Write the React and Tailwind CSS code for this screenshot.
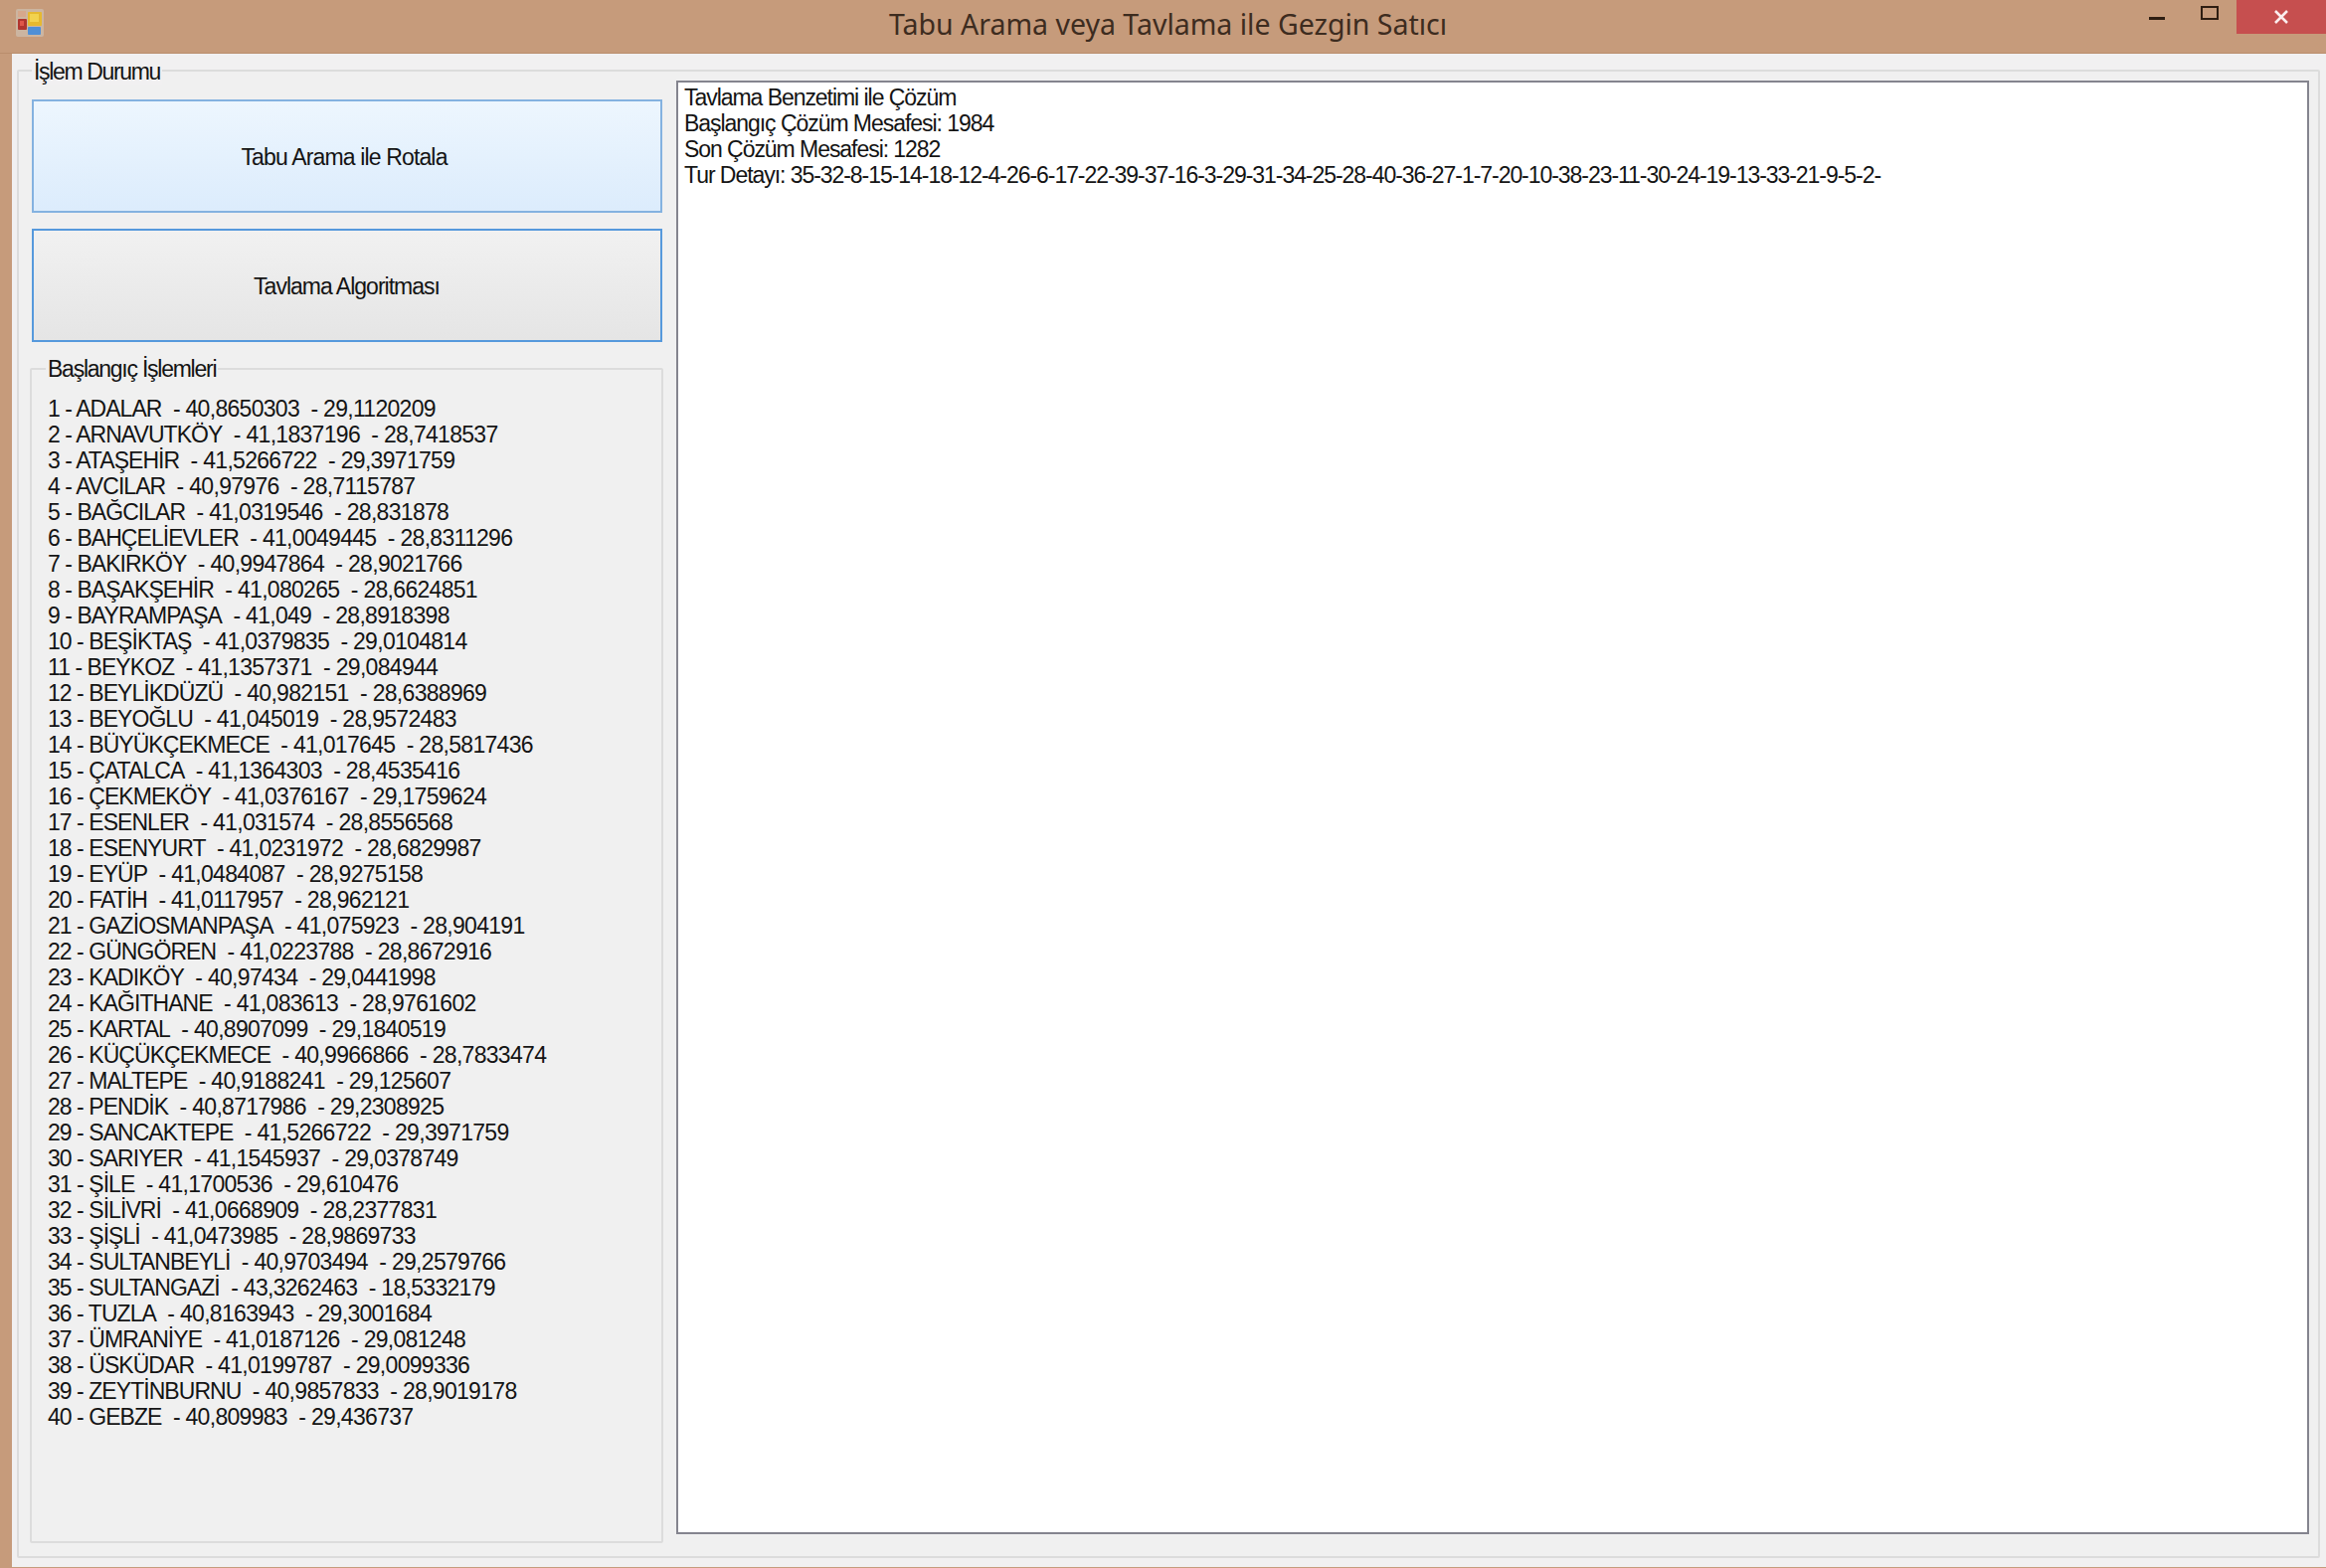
const rows = [
"1 - ADALAR  - 40,8650303  - 29,1120209",
"2 - ARNAVUTKÖY  - 41,1837196  - 28,7418537",
"3 - ATAŞEHİR  - 41,5266722  - 29,3971759",
"4 - AVCILAR  - 40,97976  - 28,7115787",
"5 - BAĞCILAR  - 41,0319546  - 28,831878",
"6 - BAHÇELİEVLER  - 41,0049445  - 28,8311296",
"7 - BAKIRKÖY  - 40,9947864  - 28,9021766",
"8 - BAŞAKŞEHİR  - 41,080265  - 28,6624851",
"9 - BAYRAMPAŞA  - 41,049  - 28,8918398",
"10 - BEŞİKTAŞ  - 41,0379835  - 29,0104814",
"11 - BEYKOZ  - 41,1357371  - 29,084944",
"12 - BEYLİKDÜZÜ  - 40,982151  - 28,6388969",
"13 - BEYOĞLU  - 41,045019  - 28,9572483",
"14 - BÜYÜKÇEKMECE  - 41,017645  - 28,5817436",
"15 - ÇATALCA  - 41,1364303  - 28,4535416",
"16 - ÇEKMEKÖY  - 41,0376167  - 29,1759624",
"17 - ESENLER  - 41,031574  - 28,8556568",
"18 - ESENYURT  - 41,0231972  - 28,6829987",
"19 - EYÜP  - 41,0484087  - 28,9275158",
"20 - FATİH  - 41,0117957  - 28,962121",
"21 - GAZİOSMANPAŞA  - 41,075923  - 28,904191",
"22 - GÜNGÖREN  - 41,0223788  - 28,8672916",
"23 - KADIKÖY  - 40,97434  - 29,0441998",
"24 - KAĞITHANE  - 41,083613  - 28,9761602",
"25 - KARTAL  - 40,8907099  - 29,1840519",
"26 - KÜÇÜKÇEKMECE  - 40,9966866  - 28,7833474",
"27 - MALTEPE  - 40,9188241  - 29,125607",
"28 - PENDİK  - 40,8717986  - 29,2308925",
"29 - SANCAKTEPE  - 41,5266722  - 29,3971759",
"30 - SARIYER  - 41,1545937  - 29,0378749",
"31 - ŞİLE  - 41,1700536  - 29,610476",
"32 - SİLİVRİ  - 41,0668909  - 28,2377831",
"33 - ŞİŞLİ  - 41,0473985  - 28,9869733",
"34 - SULTANBEYLİ  - 40,9703494  - 29,2579766",
"35 - SULTANGAZİ  - 43,3262463  - 18,5332179",
"36 - TUZLA  - 40,8163943  - 29,3001684",
"37 - ÜMRANİYE  - 41,0187126  - 29,081248",
"38 - ÜSKÜDAR  - 41,0199787  - 29,0099336",
"39 - ZEYTİNBURNU  - 40,9857833  - 28,9019178",
"40 - GEBZE  - 40,809983  - 29,436737",
];
const log = [
"Tavlama Benzetimi ile Çözüm",
"Başlangıç Çözüm Mesafesi: 1984",
"Son Çözüm Mesafesi: 1282",
"Tur Detayı: 35-32-8-15-14-18-12-4-26-6-17-22-39-37-16-3-29-31-34-25-28-40-36-27-1-7-20-10-38-23-11-30-24-19-13-33-21-9-5-2-",
];
const ui = "font-['Liberation_Sans',Arial,sans-serif] text-[23px] leading-[26px] text-[#141414]";

function AppIcon() {
  return (
    <svg width="28" height="28" viewBox="0 0 28 28" className="ml-[16px] mt-[9px]">
      <rect x="0" y="0" width="28" height="28" rx="2" fill="#cfc0b2" opacity="0.7" />
      <rect x="2" y="2" width="8" height="6" fill="#d6a88c" />
      <rect x="12" y="3" width="14" height="14" rx="1" fill="#e6b92f" />
      <rect x="14" y="5" width="9" height="8" fill="#f2d24f" />
      <rect x="2" y="10" width="9" height="11" rx="1" fill="#b0352f" />
      <rect x="4" y="12" width="4" height="5" fill="#e0564a" />
      <rect x="12" y="18" width="13" height="8" rx="1" fill="#4f8fd6" />
    </svg>
  );
}

function Row({ text }) {
  const cut = text.indexOf("  - ");
  return (
    <div className={`h-[26px] whitespace-pre ${ui}`}>
      <span className="tracking-[-0.95px]">{text.slice(0, cut)}</span>
      <span className="tracking-[-0.7px]">{text.slice(cut)}</span>
    </div>
  );
}

export default function App() {
  return (
    <div className="w-[2339px] h-[1577px] flex flex-col overflow-hidden bg-[#c69b7b] font-['Liberation_Sans',Arial,sans-serif]">
      <div className="h-[54px] shrink-0 grid grid-cols-[1fr_auto_1fr] border-b border-[#b98d6c]">
        <div className="flex items-start"><AppIcon /></div>
        <div className="ml-[10px] pt-[5px] font-['Noto_Sans',sans-serif] text-[28.5px] leading-[38px] text-[#3d2c1f] whitespace-pre">Tabu Arama veya Tavlama ile Gezgin Satıcı</div>
        <div className="flex items-start justify-end">
          <div className="w-[53px] h-[37px] flex items-center justify-center">
            <div className="w-[16px] h-[3px] mr-[2px] bg-[#2e1e12]" />
          </div>
          <div className="w-[53px] h-[26px] flex items-center justify-center">
            <div className="w-[18px] h-[14px] mr-[2px] border-2 border-[#2e1e12]" />
          </div>
          <div className="w-[90px] h-[34px] bg-[#c64f4f] flex items-center justify-center">
            <svg width="14" height="14" viewBox="0 0 14 14"><path d="M1 1 L13 13 M13 1 L1 13" stroke="#fbeeee" strokeWidth="2.6" /></svg>
          </div>
        </div>
      </div>

      <div className="flex-1 ml-[12px] mb-px bg-[#f1f0f1] pt-[16px] pl-[5px] pr-[6px] pb-[9px] flex flex-col">
        <div className="relative flex-1 border-2 border-[#dcdcdc] rounded-[2px] flex gap-[13px] pl-[11px] pr-[9px] pt-[9px] pb-[13px] bg-[#f0f0f0]">
          <span className={`absolute left-[13px] -top-[13px] px-[2px] bg-[#f1f0f1] whitespace-pre tracking-[-1.35px] ${ui}`}>İşlem Durumu</span>

          <div className="w-[637px] shrink-0 pt-[19px] flex flex-col">
            <button className={`ml-[2px] w-[634px] h-[114px] border-2 border-[#84b2e0] bg-gradient-to-b from-[#edf6fe] to-[#dcecfc] pr-[6px] pt-[2px] tracking-[-0.85px] ${ui}`}>Tabu Arama ile Rotala</button>
            <button className={`ml-[2px] mt-[16px] w-[634px] h-[114px] border-2 border-[#5699dc] bg-gradient-to-b from-[#f1f1f1] to-[#e5e5e5] pr-[1px] pt-[2px] tracking-[-1px] ${ui}`}>Tavlama Algoritması</button>

            <div className="relative flex-1 mt-[26px] border-2 border-[#dcdcdc] rounded-[2px] pl-[16px] pt-[26px]">
              <span className={`absolute left-[14px] -top-[14px] px-[2px] bg-[#f0f0f0] whitespace-pre tracking-[-1.25px] ${ui}`}>Başlangıç İşlemleri</span>
              {rows.map((r) => (
                <Row key={r} text={r} />
              ))}
            </div>
          </div>

          <div className="flex-1 mb-[9px] border-2 border-[#84848e] bg-white pl-[6px] pt-[2px]">
            {log.map((l) => (
              <div key={l} className={`h-[26px] whitespace-pre tracking-[-1.05px] ${ui}`}>{l}</div>
            ))}
          </div>
        </div>
      </div>
    </div>
  );
}
